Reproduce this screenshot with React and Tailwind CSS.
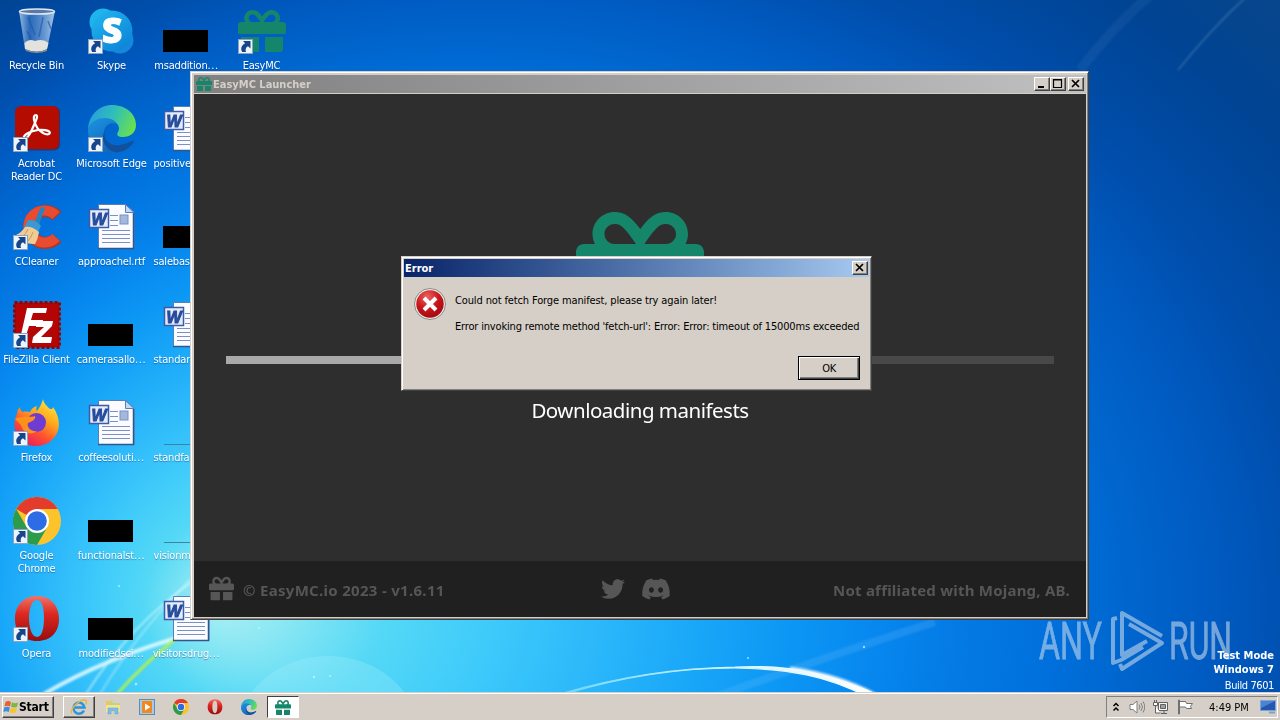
import { FaDiscord, FaTwitter } from "react-icons/fa";

const TAHOMA = "font-['DejaVu_Sans_Condensed','DejaVu_Sans',sans-serif]";
const RAISED =
  "border border-t-white border-l-white border-r-[#404040] border-b-[#404040] shadow-[inset_-1px_-1px_0_#808080]";

function Wallpaper() {
  return (
    <svg className="absolute inset-0 h-full w-full" viewBox="0 0 1280 720" aria-hidden="true">
      <defs>
        <radialGradient
          id="sky"
          gradientUnits="userSpaceOnUse"
          cx="0"
          cy="0"
          r="1"
          fx="-0.375"
          fy="0"
          gradientTransform="translate(632 605) scale(1100 935)"
        >
          <stop offset="0" stopColor="#acf0f4" />
          <stop offset="0.05" stopColor="#86e6f3" />
          <stop offset="0.11" stopColor="#54d8f6" />
          <stop offset="0.18" stopColor="#3ecafa" />
          <stop offset="0.25" stopColor="#2cb8fa" />
          <stop offset="0.32" stopColor="#18a6f8" />
          <stop offset="0.38" stopColor="#0c96f4" />
          <stop offset="0.44" stopColor="#0686ee" />
          <stop offset="0.49" stopColor="#047ae4" />
          <stop offset="0.55" stopColor="#0070dc" />
          <stop offset="0.6" stopColor="#0066ce" />
          <stop offset="0.66" stopColor="#005ac0" />
          <stop offset="0.72" stopColor="#004eac" />
          <stop offset="0.82" stopColor="#004494" />
          <stop offset="0.95" stopColor="#0c4784" />
        </radialGradient>
        <linearGradient id="arc" x1="0" x2="1">
          <stop offset="0" stopColor="#6fd6ff" />
          <stop offset="0.55" stopColor="#d8f4ff" />
          <stop offset="1" stopColor="#fff" />
        </linearGradient>
        <filter id="soft" x="-20%" y="-20%" width="140%" height="140%">
          <feGaussianBlur stdDeviation="1.2" />
        </filter>
      </defs>
      <rect width="1280" height="720" fill="url(#sky)" />
      <ellipse cx="328" cy="738" rx="92" ry="82" fill="#a8f0fa" opacity="0.28" />
      <g fill="none" filter="url(#soft)">
        <path d="M44 694Q105 658 190 634" stroke="#e6fbff" strokeWidth="4" opacity="0.85" />
        <path d="M86 694Q130 625 192 582" stroke="#dffaff" strokeWidth="2" opacity="0.6" />
        <path d="M100 694Q140 628 200 570" stroke="#dffaff" strokeWidth="2" opacity="0.4" />
        <path d="M117 694Q145 662 182 634" stroke="#a8f05a" strokeWidth="3" />
        <path d="M690 706Q830 655 935 622" stroke="#7cc4ff" strokeWidth="8" opacity="0.2" />
        <path d="M1080 70Q1110 30 1150 -5" stroke="#4c88c0" strokeWidth="10" opacity="0.15" />
        <path d="M1178 70Q1210 30 1248 -5" stroke="#6c9cc8" strokeWidth="2" opacity="0.35" />
        <path d="M790 669Q840 676 876 696" stroke="#fff" strokeWidth="5" opacity="0.8" />
      </g>
      <path
        d="M563 693Q650 668 735 667C790 664 832 674 880 696L866 696C826 676 792 669 735 668Q652 668 565 694Z"
        fill="url(#arc)"
        stroke="url(#arc)"
        strokeWidth="1.200"
      />
      <g fill="#d9f6ff" opacity="0.7">
        <circle cx="259" cy="628" r="1" />
        <circle cx="119" cy="586" r="1" />
        <circle cx="314" cy="677" r="1.200" />
        <circle cx="330" cy="676" r="1" />
        <circle cx="136" cy="684" r="1.300" />
        <circle cx="864" cy="647" r="1.200" />
        <circle cx="748" cy="658" r="1" />
      </g>
    </svg>
  );
}

function Gift({ className }) {
  return (
    <svg viewBox="0 0 512 512" preserveAspectRatio="none" fill="currentColor" className={className}>
      <path d="M32 448c0 17.700 14.300 32 32 32h160V320H32v128zm256 32h160c17.700 0 32-14.300 32-32V320H288v160zm192-320h-42.100c6.200-12.100 10.100-25.500 10.100-40 0-48.500-39.500-88-88-88-41.600 0-68.500 21.300-103 68.300-34.500-47-61.400-68.300-103-68.300-48.500 0-88 39.500-88 88 0 14.500 3.800 27.900 10.100 40H32c-17.700 0-32 14.300-32 32v80c0 8.800 7.200 16 16 16h480c8.800 0 16-7.200 16-16v-80c0-17.700-14.300-32-32-32zm-326.100 0c-22.100 0-40-17.900-40-40s17.900-40 40-40c19.900 0 34.600 3.300 86.100 80h-86.100zm206.100 0h-86.100c51.400-76.500 65.700-80 86.100-80 22.100 0 40 17.900 40 40s-17.900 40-40 40z" />
    </svg>
  );
}

function ShortcutArrow() {
  return (
    <svg className="absolute bottom-px left-0 h-[15px] w-[15px]" viewBox="0 0 15 15">
      <rect x="0.500" y="0.500" width="14" height="14" fill="#eef4fb" stroke="#8aa4c4" />
      <path d="M5 2h7.500v7.500L10 7.200C7.600 8.500 7.200 10.500 8 13H4.200C2.200 9.500 3.500 6.500 7.200 4.300Z" fill="#17458c" />
    </svg>
  );
}

function RecycleBin() {
  return (
    <svg viewBox="0 0 48 48" className="h-12 w-12">
      <defs>
        <linearGradient id="bin" x1="0" x2="1">
          <stop offset="0" stopColor="#b4d0ee" stopOpacity="0.85" />
          <stop offset="0.3" stopColor="#3c78c4" stopOpacity="0.7" />
          <stop offset="0.7" stopColor="#7ca8dc" stopOpacity="0.8" />
          <stop offset="1" stopColor="#c4daf2" stopOpacity="0.85" />
        </linearGradient>
      </defs>
      <path d="M6 4L12 42Q24 48 34 42L42 4Z" fill="url(#bin)" />
      <path d="M11.500 36Q16 31 22 34 30 31 35.500 36L34 42Q24 47 12 42Z" fill="#e4e2dc" />
      <path d="M12 42Q24 48 34 42L34 44Q24 48 13 44Z" fill="#8c8c8c" />
      <path d="M15 10L22 28M30 10L26 30M35 14L38 22M14 24L18 32" stroke="#1c54a4" strokeWidth="1.500" opacity="0.6" />
      <ellipse cx="24" cy="4.500" rx="17.500" ry="2.600" fill="#5c78a4" stroke="#dfe8f2" strokeWidth="1.500" />
    </svg>
  );
}

function Skype() {
  return (
    <svg viewBox="0 0 48 48" className="h-12 w-12">
      <defs>
        <linearGradient id="skype" x1="0" y1="0" x2="0.800" y2="1">
          <stop offset="0" stopColor="#22b8f0" />
          <stop offset="1" stopColor="#0c84d8" />
        </linearGradient>
      </defs>
      <circle cx="15" cy="15" r="13.500" fill="#1fb4ee" />
      <circle cx="32" cy="33" r="13.500" fill="#1488dc" />
      <circle cx="24" cy="24" r="20.500" fill="url(#skype)" />
      <text
        x="24"
        y="36"
        textAnchor="middle"
        fontFamily="Open Sans, sans-serif"
        fontSize="35"
        fontWeight="800"
        fill="#fff"
        stroke="#fff"
      >
        S
      </text>
    </svg>
  );
}

function Acrobat() {
  return (
    <svg viewBox="0 0 48 48" className="h-12 w-12">
      <rect x="2" y="1.500" width="45" height="44" rx="6" fill="#600808" opacity="0.5" />
      <rect x="2" y="1" width="44" height="43" rx="6" fill="#b40c00" />
      <path
        d="M23 10c-4 0-2 8 2 14 4 4 8 6 11 5 3-2-2-5-11-4-8 1-15 5-14 8 2 3 7-5 10-13 3-6 4-10 2-10Z"
        fill="none"
        stroke="#fff"
        strokeWidth="2.200"
      />
    </svg>
  );
}

function Edge({ className = "h-12 w-12" }) {
  return (
    <svg viewBox="0 0 48 48" className={className}>
      <defs>
        <linearGradient id="edgeTop" x1="0" y1="0.300" x2="1" y2="0.600">
          <stop offset="0" stopColor="#259ce0" />
          <stop offset="0.5" stopColor="#30c0b8" />
          <stop offset="1" stopColor="#6ae04c" />
        </linearGradient>
        <linearGradient id="edgeLow" x1="0" y1="0" x2="0.600" y2="1">
          <stop offset="0" stopColor="#1c94e0" />
          <stop offset="1" stopColor="#1266bc" />
        </linearGradient>
      </defs>
      <path d="M0 24C1 10 11 0 24 0c14 0 24 9 24 20 0 8-6 12-13 12-5 0-7-2-5-5 3-5-1-11-8-12C11 13 3 17 0 24Z" fill="url(#edgeTop)" />
      <path d="M0 24c2-7 9-11 16-11 6 0 11 2 13 6-8-3-14 3-13 11 1 9 8 16 17 17C15 53-1 41 0 24Z" fill="url(#edgeLow)" />
      <path d="M17 25c-3 10 6 17 15 15 6-1 10-3 12-4 2-1 2 1 1 2-5 7-12 10-18 9-10-2-15-13-10-22Z" fill="#13509c" />
    </svg>
  );
}

function CCleaner() {
  return (
    <svg viewBox="0 0 48 48" className="h-12 w-12">
      <path d="M44 13A16 16 0 1 0 44 35" fill="none" stroke="#b8341c" strokeWidth="12" />
      <path d="M43 12.500A16 16 0 1 0 43 34.500" fill="none" stroke="#e84c30" strokeWidth="10" />
      <path d="M28 4l4 1-6 17-5-2Z" fill="#2484c4" />
      <path d="M15 17q8-1 13 6l-3 6q-8-5-14-4Z" fill="#3c98d4" />
      <path d="M12 24q7-1 14 5-1 7-4 12-10 1-19-9 6-3 9-8Z" fill="#f0cc94" />
      <path d="M15 26q-2 5-6 8M20 29q-2 6-5 9" fill="none" stroke="#c89c5c" />
    </svg>
  );
}

function FileZilla() {
  return (
    <svg viewBox="0 0 48 48" className="h-12 w-12">
      <rect x="1.500" y="1.500" width="45" height="45" fill="#b40404" stroke="#8c0808" strokeWidth="3" strokeDasharray="3 2" />
      <path d="M14 7h20l-1 5H20l-2 7h12l-1 6H16l-4 13H7Z" fill="#fff" />
      <path d="M24 20h16l-1 5-11 11h11l-1 6H19l1-6 11-10h-8Z" fill="#fff" />
    </svg>
  );
}

function Firefox() {
  return (
    <svg viewBox="0 0 48 48" className="h-12 w-12">
      <defs>
        <linearGradient id="fox" x1="0.900" y1="0" x2="0.300" y2="1">
          <stop offset="0" stopColor="#fff04c" />
          <stop offset="0.4" stopColor="#ffa81c" />
          <stop offset="0.7" stopColor="#ff5030" />
          <stop offset="1" stopColor="#e81c60" />
        </linearGradient>
      </defs>
      <path d="M30 0c1 5 4 7 7 10 2 0 3 0 3-2 8 11 8 25-1 33-10 9-27 8-34-3C0 30 1 21 4 15c0-3 1-5 3-7 0 3 1 4 3 5 3-1 5 0 7 0 2-4 4-5 7-6-1 2-1 4 0 5 3-4 5-8 6-12Z" fill="url(#fox)" />
      <circle cx="23.500" cy="23.500" r="9.500" fill="#6e3cd0" />
      <path d="M2 20c7-4 14-1 20-3 1 3-2 5-7 7-2 4 3 9 9 8-6 5-14 2-16-6Z" fill="#ff901c" />
    </svg>
  );
}

function Chrome({ className = "h-12 w-12" }) {
  return (
    <svg viewBox="0 0 48 48" className={className}>
      <circle cx="24" cy="24" r="24" fill="#fcc42c" />
      <path d="M24 24L3.200 12A24 24 0 0 1 44.800 12Z" fill="#e43c2c" />
      <path d="M3.200 12A24 24 0 0 0 24 48L34.400 30 24 24 13.600 30Z" fill="#2c9c4c" />
      <path d="M24 12h20.800L34 30Z" fill="#fcc42c" />
      <circle cx="24" cy="24" r="12" fill="#fff" />
      <circle cx="24" cy="24" r="9.800" fill="#2c6ce4" />
    </svg>
  );
}

function Opera({ className = "h-12 w-12" }) {
  return (
    <svg viewBox="0 0 48 48" className={className}>
      <defs>
        <linearGradient id="opera" x1="0" y1="0" x2="0" y2="1">
          <stop offset="0" stopColor="#f07468" />
          <stop offset="0.4" stopColor="#dc2820" />
          <stop offset="1" stopColor="#980c0c" />
        </linearGradient>
      </defs>
      <path
        fillRule="evenodd"
        d="M24 1C10 1 2 11 2 24s8 22 22 22 22-9 22-22S38 1 24 1Zm0 4c5 0 7 8 7 18s-2 19-7 19-8-9-8-19 3-18 8-18Z"
        fill="url(#opera)"
      />
    </svg>
  );
}

function WordDoc() {
  return (
    <svg viewBox="0 0 48 48" className="h-12 w-12">
      <path d="M10.500 1.500h27l8.500 8v36H10.500Z" fill="#fafcff" stroke="#5c7cb4" />
      <path d="M45.500 10v35.500H10" fill="none" stroke="#34548c" strokeWidth="1.500" />
      <path d="M37.500 1.500v8H46Z" fill="#c4d8f4" stroke="#5c7cb4" />
      <path d="M22 12.500h8M22 17.500h8M22 22.500h8M14 27.500h28M14 31.500h28M14 35.500h28M14 39.500h28" stroke="#7c90c4" />
      <rect x="32" y="12" width="8" height="9" fill="#a4b8dc" stroke="#7c90c4" />
      <rect x="1.500" y="6.500" width="19" height="18" fill="#e4ecfc" stroke="#3c5ca8" strokeWidth="1.500" />
      <text
        x="11"
        y="21.500"
        textAnchor="middle"
        fontFamily="Liberation Sans, sans-serif"
        fontSize="16"
        fontWeight="700"
        fontStyle="italic"
        fill="#284c9c"
        stroke="#284c9c"
      >
        W
      </text>
    </svg>
  );
}

function Thumb() {
  return <div className="mt-[23px] mr-[2px] h-[22px] w-[45px] bg-black" />;
}

function Sliver() {
  return <div className="mt-[45px] h-px w-[45px] bg-[#3a86a0]" />;
}

const COLUMNS = [
  [
    { art: <RecycleBin />, label: "Recycle Bin" },
    { art: <Acrobat />, label: "Acrobat Reader DC", link: true, wrap: true },
    { art: <CCleaner />, label: "CCleaner", link: true },
    { art: <FileZilla />, label: "FileZilla Client", link: true },
    { art: <Firefox />, label: "Firefox", link: true },
    { art: <Chrome />, label: "Google Chrome", link: true, wrap: true },
    { art: <Opera />, label: "Opera", link: true },
  ],
  [
    { art: <Skype />, label: "Skype", link: true },
    { art: <Edge />, label: "Microsoft Edge", link: true },
    { art: <WordDoc />, label: "approachel.rtf" },
    { art: <Thumb />, label: "camerasallo", more: true },
    { art: <WordDoc />, label: "coffeesoluti", more: true },
    { art: <Thumb />, label: "functionalst", more: true },
    { art: <Thumb />, label: "modifiedsci", more: true },
  ],
  [
    { art: <Thumb />, label: "msaddition", more: true },
    { art: <WordDoc />, label: "positive.rtf", left: true },
    { art: <Thumb />, label: "salebase", more: true, left: true },
    { art: <WordDoc />, label: "standard", more: true, left: true },
    { art: <Sliver />, label: "standfa", more: true, left: true },
    { art: <Sliver />, label: "visionma", more: true, left: true },
    { art: <WordDoc />, label: "visitorsdrug", more: true },
  ],
  [{ art: <Gift className="h-12 w-12 text-[#16866a]" />, label: "EasyMC", link: true }],
];

function DesktopIcon({ art, label, link, wrap, more, left }) {
  return (
    <div className="flex h-[98px] w-[75px] shrink-0 flex-col items-center">
      <div className="relative mt-[7px] flex h-12 w-12 justify-center">
        {art}
        {link && <ShortcutArrow />}
      </div>
      <span
        className={`mt-1 text-[11px] leading-[13px] tracking-[-0.18px] text-white [text-shadow:0_1px_1px_rgba(0,40,100,0.45)] ${
          wrap ? "w-[62px]" : "whitespace-nowrap"
        } ${left ? "w-[66px] text-left" : "text-center"}`}
      >
        {label}
        {more && <span className="tracking-[0.6px]">...</span>}
      </span>
    </div>
  );
}

function CaptionButton({ kind }) {
  return (
    <div className={`flex h-[14px] w-4 items-center justify-center bg-[#d6cfc7] ${RAISED}`}>
      <svg viewBox="0 0 12 10" className="h-[10px] w-3" fill="none" stroke="#000">
        {kind === "min" && <path d="M2 8h6" strokeWidth="2" />}
        {kind === "max" && <path d="M1.500 0.500h8v8h-8ZM1 1h9" strokeWidth="1.200" />}
        {kind === "close" && <path d="M2 1l7 7M9 1L2 8" strokeWidth="1.700" />}
      </svg>
    </div>
  );
}

function LauncherWindow() {
  return (
    <div className="absolute top-[71px] left-[190px] flex h-[549px] w-[899px] flex-col border border-t-[#d6cfc7] border-r-[#404040] border-b-[#404040] border-l-[#d6cfc7] bg-[#d6cfc7] py-[2px] pr-[2px] pl-[3px] shadow-[inset_1px_1px_0_#fff,inset_-1px_-1px_0_#808080]">
      <div className="mt-px flex h-[18px] shrink-0 items-center bg-linear-to-r from-[#808080] to-[#c0c0c0] pr-[2px]">
        <Gift className="ml-[2px] h-4 w-4 text-[#16866a]" />
        <span className="ml-px flex-1 pt-px text-[11px] leading-[14px] font-bold text-[#d6cfc7]">EasyMC Launcher</span>
        <CaptionButton kind="min" />
        <CaptionButton kind="max" />
        <div className="w-[2px]" />
        <CaptionButton kind="close" />
      </div>
      <div className="mt-px flex flex-1 flex-col items-center bg-[#2e2e2e] font-['Noto_Sans',sans-serif]">
        <Gift className="mt-[110px] h-32 w-32 shrink-0 text-[#16866a]" />
        <div className="mt-6 h-2 w-[828px] shrink-0 bg-[#484848]">
          <div className="h-full w-[40%] bg-[#a9a9a9]" />
        </div>
        <p className="mt-[31px] text-[20.5px] leading-[30px] tracking-[-0.5px] whitespace-nowrap text-white">
          Downloading manifests
        </p>
        <footer className="mt-auto flex h-14 w-full shrink-0 items-center bg-[#202020] px-4 pt-[2px] text-[15px] font-bold tracking-[0.3px] text-[#565656]">
          <div className="flex w-[391px] items-center">
            <Gift className="-mt-[3px] -ml-px h-[27px] w-[25px]" />
            <span className="ml-[9px]">© EasyMC.io 2023 - v1.6.11</span>
          </div>
          <FaTwitter className="-mt-[2px] h-6 w-6" />
          <FaDiscord className="-mt-[2px] ml-4 h-[30px] w-[30px]" />
          <span className="flex-1 text-right tracking-[0.22px]">Not affiliated with Mojang, AB.</span>
        </footer>
      </div>
    </div>
  );
}

function ErrorDialog() {
  return (
    <div className="absolute top-[256px] left-[401px] flex h-[135px] w-[471px] flex-col border border-t-[#d6cfc7] border-r-[#404040] border-b-[#404040] border-l-[#d6cfc7] bg-[#d6cfc7] p-[2px] text-[11px] shadow-[inset_1px_1px_0_#fff,inset_-1px_-1px_0_#808080]">
      <div className="flex h-[18px] shrink-0 items-center bg-linear-to-r from-[#0a246a] to-[#a6caf0] pr-px">
        <span className="ml-px flex-1 pt-px leading-[14px] font-bold text-white">Error</span>
        <CaptionButton kind="close" />
      </div>
      <div className="flex pt-[11px] pl-[10px]">
        <svg viewBox="0 0 32 32" className="h-8 w-8 shrink-0">
          <defs>
            <radialGradient id="err" cx="0.4" cy="0.25" r="0.8">
              <stop offset="0" stopColor="#ec6464" />
              <stop offset="0.55" stopColor="#c81418" />
              <stop offset="1" stopColor="#a00810" />
            </radialGradient>
          </defs>
          <circle cx="16" cy="16" r="15.500" fill="#ece8e4" stroke="#8c8c8c" />
          <circle cx="16" cy="16" r="13.700" fill="url(#err)" />
          <path d="M10 10l12 12M22 10L10 22" stroke="#fff" strokeWidth="4" />
        </svg>
        <div className="ml-[9px] tracking-[-0.17px] whitespace-nowrap text-black">
          <p className="mt-[6px] leading-[13px] tracking-[-0.13px]">
            Could not fetch Forge manifest, please try again later!
          </p>
          <p className="mt-[13px] leading-[13px]">
            Error invoking remote method 'fetch-url': Error: Error: timeout of 15000ms exceeded
          </p>
        </div>
      </div>
      <div className="mt-auto mr-[9px] mb-[8px] flex justify-end">
        <button className="h-6 w-[62px] border border-black bg-[#d6cfc7] pt-[2px] tracking-[-0.4px] text-black shadow-[inset_1px_1px_0_#fff,inset_-1px_-1px_0_#404040,inset_-2px_-2px_0_#808080]">
          OK
        </button>
      </div>
    </div>
  );
}

function Watermark() {
  return (
    <svg className="absolute top-[605px] left-[1035px] h-[70px] w-[200px]" viewBox="0 0 200 70" opacity="0.6">
      <g fill="#c4d8ec" stroke="#c4d8ec" strokeWidth="0.800" fontFamily="Roboto, sans-serif" fontSize="52">
        <text x="4" y="54" textLength="63" lengthAdjust="spacingAndGlyphs">ANY</text>
        <text x="134" y="54" textLength="63" lengthAdjust="spacingAndGlyphs">RUN</text>
      </g>
      <g fill="none" stroke="#c4d8ec" strokeWidth="4" strokeLinejoin="round">
        <path d="M82 13L78 14V58L86 55L108 42" />
        <path d="M127 31L87 8V50L112 36" />
        <path d="M94 19L127 38L87 64L85 59" />
      </g>
    </svg>
  );
}

function WindowsFlag() {
  return (
    <svg viewBox="0 0 16 16" className="h-4 w-4">
      <path d="M2.500 3Q5 1 8 3L7 7.500Q4 6 1.500 7.500Z" fill="#e8602c" />
      <path d="M9 3.300Q12 5 15 3.500L14 8Q11 9 8 7.800Z" fill="#7cb83c" />
      <path d="M1.300 8.500Q4 7 6.800 8.500L5.800 13Q3 11.500 0.300 13Z" fill="#3c8ce0" />
      <path d="M7.800 8.800Q11 10 13.800 9L12.800 13.500Q10 14.500 6.800 13.300Z" fill="#f8c42c" />
    </svg>
  );
}

function Explorer() {
  return (
    <svg viewBox="0 0 16 16" className="h-4 w-4">
      <path d="M1 2h6l1 2h7v9H1Z" fill="#ecc85c" />
      <path d="M3 4h11v3H3Z" fill="#b4d88c" />
      <path d="M1 6h14v7H1Z" fill="#f8e290" />
      <path d="M3 15V9h10v6h-3v-3H6v3Z" fill="#7cc0e8" stroke="#5ca0cc" strokeWidth="0.500" />
    </svg>
  );
}

function InternetExplorer() {
  return (
    <svg viewBox="0 0 18 18" className="h-[18px] w-[18px]" fill="none">
      <path d="M14 12.500A5.500 5.500 0 1 1 14.500 9.500H5" stroke="#2c94dc" strokeWidth="2.500" />
      <path d="M2 15.500C-1 11 10 1 15.500 2.200 17 3 16.500 5 15.500 6.500" stroke="#e8b83c" strokeWidth="1.400" />
    </svg>
  );
}

function MediaPlayer() {
  return (
    <svg viewBox="0 0 16 16" className="h-4 w-4">
      <rect x="0.500" y="0.500" width="15" height="15" fill="#a4cce8" stroke="#5c8cb8" />
      <rect x="3" y="2" width="10" height="12" fill="#f08c1c" />
      <circle cx="8" cy="8" r="5" fill="#f4841c" />
      <path d="M6 4.500L11.500 8 6 11.500Z" fill="#fff" />
    </svg>
  );
}

function Tray() {
  return (
    <div className="mr-[2px] flex h-[22px] w-[172px] items-center border border-t-[#808080] border-r-white border-b-white border-l-[#808080] pl-[5px] text-[11px] text-black">
      <svg viewBox="0 0 8 10" className="h-[10px] w-2" fill="none" stroke="#000" strokeWidth="1.500">
        <path d="M1.500 4L4 1.500 6.500 4M1.500 8.500L4 6l2.500 2.500" />
      </svg>
      <svg viewBox="0 0 16 16" className="ml-[9px] h-4 w-4" fill="none" stroke="#808080">
        <path d="M1 5.500h3L8 2v12L4 10.500H1Z" fill="#fff" />
        <path d="M10 5.500q2 2.500 0 5M12 4q3 4 0 8M14 2.500q3.500 5.500 0 11" />
      </svg>
      <svg viewBox="0 0 16 16" className="ml-[8px] h-4 w-4" fill="none" stroke="#606060">
        <path d="M5.500 3.500h9v8h-9ZM8 14.500h6M11 12v2" fill="#f4f4f4" />
        <path d="M7.500 5.500h5v4h-5Z" fill="#a0a0a0" />
        <path d="M0.500 3.500h4v3h-4ZM1.500 1v2M3.500 1v2M2.500 7v7h5" fill="#fff" />
      </svg>
      <svg viewBox="0 0 16 16" className="ml-[8px] h-4 w-4" fill="#fff" stroke="#707070">
        <path d="M1.500 1v14h1V1ZM2.500 2.500h6l1 2h6l-2 3 1 2h-5l-1-1.500h-6Z" />
      </svg>
      <span className="ml-[16px] pt-[2px] whitespace-nowrap">4:49 PM</span>
      <svg viewBox="0 0 16 14" className="mr-px ml-auto h-[14px] w-4">
        <rect x="0.500" y="0.500" width="15" height="10" fill="#2458b0" stroke="#7ca4d8" />
        <path d="M1 1h14L1 8Z" fill="#4c84d4" />
        <path d="M9 12.500h6" stroke="#80a0c8" strokeWidth="2" />
      </svg>
    </div>
  );
}

function Taskbar() {
  return (
    <div className="relative mt-auto flex h-7 shrink-0 items-center border-t border-[#d6cfc7] bg-[#d6cfc7] pt-px shadow-[inset_0_1px_0_#fff]">
      <div className={`ml-[2px] flex h-[22px] w-[52px] items-center ${RAISED}`}>
        <WindowsFlag />
        <span className="text-[12px] font-bold tracking-[-0.2px] text-black">Start</span>
      </div>
      <div className={`ml-[9px] flex h-[22px] w-8 items-center justify-center ${RAISED}`}>
        <InternetExplorer />
      </div>
      <div className="ml-[10px] flex items-center gap-[18px]">
        <Explorer />
        <MediaPlayer />
        <Chrome className="h-4 w-4" />
        <Opera className="h-4 w-4" />
        <Edge className="h-4 w-4" />
      </div>
      <div className="ml-[10px] flex h-[22px] w-8 items-center justify-center border border-t-[#404040] border-r-white border-b-white border-l-[#404040] bg-white">
        <Gift className="h-[17px] w-4 text-[#16866a]" />
      </div>
      <div className="flex-1" />
      <Tray />
    </div>
  );
}

export default function App() {
  return (
    <div className={`relative flex h-[720px] w-[1280px] flex-col overflow-hidden bg-[#0468d0] ${TAHOMA}`}>
      <Wallpaper />
      <div className="relative -ml-px flex">
        {COLUMNS.map((column, i) => (
          <div key={i} className="flex flex-col">
            {column.map((item) => (
              <DesktopIcon key={item.label} {...item} />
            ))}
          </div>
        ))}
      </div>
      <LauncherWindow />
      <ErrorDialog />
      <Watermark />
      <div className="absolute right-[6px] bottom-[26px] text-right text-[11px] text-white">
        <p className="leading-[14px] font-bold">Test Mode</p>
        <p className="leading-[14px] font-bold">Windows 7</p>
        <p className="leading-[17px] tracking-[-0.4px]">Build 7601</p>
      </div>
      <Taskbar />
    </div>
  );
}
